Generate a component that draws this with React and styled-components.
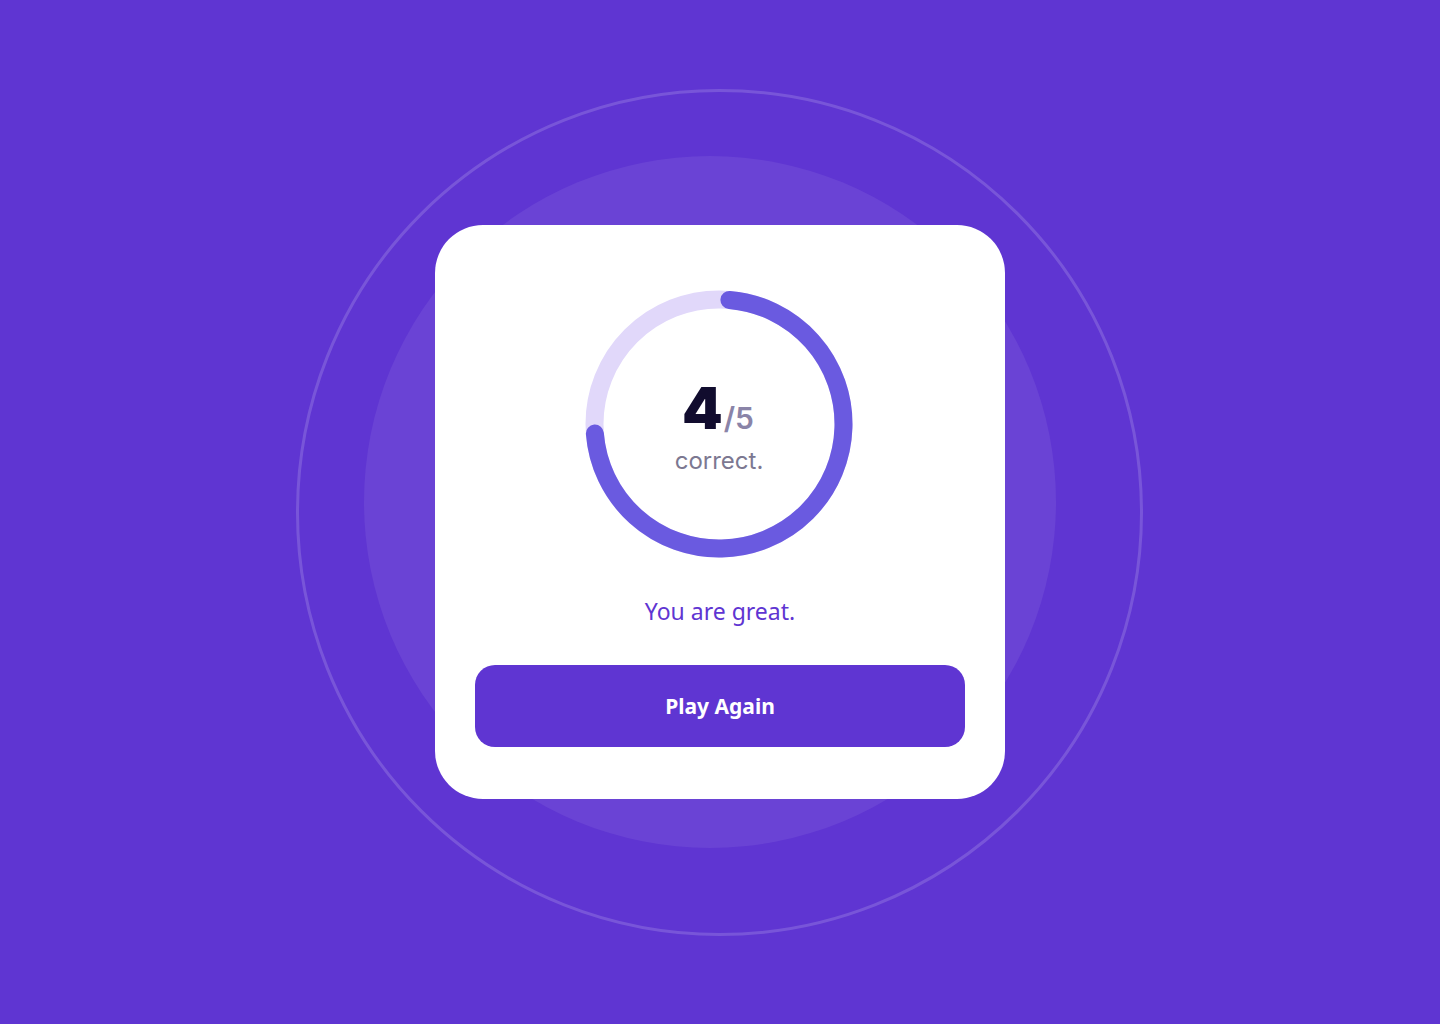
import React from "react";
import styled, { createGlobalStyle } from "styled-components";

const GlobalStyle = createGlobalStyle`
  html, body { margin: 0; padding: 0; }
  body {
    background: #5f35d2;
    font-family: "Inter", "Noto Sans", sans-serif;
  }
  * { box-sizing: border-box; }
`;

const Page = styled.main`
  position: relative;
  width: 100%;
  height: 1024px;
  overflow: hidden;
  display: flex;
  align-items: center;
  justify-content: center;
  background: #5f35d2;
`;

const Halo = styled.div`
  position: absolute;
  border-radius: 50%;
  pointer-events: none;
  left: ${(p) => p.$cx - p.$size / 2}px;
  top: ${(p) => p.$cy - p.$size / 2}px;
  width: ${(p) => p.$size}px;
  height: ${(p) => p.$size}px;
  background: ${(p) => p.$fill || "transparent"};
  border: ${(p) => (p.$line ? `3px solid ${p.$line}` : "none")};
`;

const Card = styled.section`
  position: relative;
  z-index: 1;
  width: 570px;
  height: 574px;
  background: #ffffff;
  border-radius: 48px;
  padding: 65px 40px 0;
  display: flex;
  flex-direction: column;
  align-items: center;
`;

const RingWrap = styled.div`
  display: grid;
  width: 268px;
  height: 268px;
  margin-left: -2px;
  & > * {
    grid-area: 1 / 1;
  }
`;

const Score = styled.div`
  display: flex;
  flex-direction: column;
  align-items: center;
  justify-content: center;
  padding-top: 4px;
`;

const ScoreLine = styled.div`
  display: flex;
  align-items: baseline;
  line-height: 1;
  margin-left: -2px;
`;

const Big = styled.span`
  font-family: "Inter", sans-serif;
  font-size: 58px;
  font-weight: 900;
  color: #110c2e;
  letter-spacing: -1px;
`;

const Total = styled.span`
  font-family: "Inter", sans-serif;
  font-size: 30px;
  font-weight: 600;
  color: #8a84a8;
  margin-left: 2px;
`;

const Label = styled.span`
  font-family: "Inter", sans-serif;
  font-size: 24px;
  font-weight: 400;
  color: #7c7891;
  margin-top: 12px;
  line-height: 1;
`;

const Message = styled.p`
  margin: 38px 0 0;
  font-family: "Noto Sans", "Open Sans", sans-serif;
  font-size: 23px;
  line-height: 30px;
  color: #5f35d2;
`;

const Button = styled.button`
  margin-top: 39px;
  width: 100%;
  height: 82px;
  border: none;
  border-radius: 20px;
  background: #5f35d2;
  color: #ffffff;
  font-family: "Noto Sans", "Open Sans", sans-serif;
  font-size: 21px;
  font-weight: 700;
  cursor: pointer;
`;

function Ring() {
  const cx = 134;
  const r = 124.5;
  const a1 = (4.8 * Math.PI) / 180;
  const a2 = (265.6 * Math.PI) / 180;
  const x1 = cx + r * Math.sin(a1);
  const y1 = cx - r * Math.cos(a1);
  const x2 = cx + r * Math.sin(a2);
  const y2 = cx - r * Math.cos(a2);
  return (
    <svg width="268" height="268" viewBox="0 0 268 268">
      <circle cx={cx} cy={cx} r={r} fill="none" stroke="#e1d8fa" strokeWidth="18" />
      <path
        d={`M ${x1} ${y1} A ${r} ${r} 0 1 1 ${x2} ${y2}`}
        fill="none"
        stroke="#6a5ae0"
        strokeWidth="18"
        strokeLinecap="round"
      />
    </svg>
  );
}

export default function App() {
  return (
    <>
      <GlobalStyle />
      <Page>
        <Halo $cx={710} $cy={502} $size={692} $fill="rgba(255,255,255,0.07)" />
        <Halo $cx={719.5} $cy={512} $size={847} $line="rgba(255,255,255,0.16)" />
        <Card>
          <RingWrap>
            <Ring />
            <Score>
              <ScoreLine>
                <Big>4</Big>
                <Total>/5</Total>
              </ScoreLine>
              <Label>correct.</Label>
            </Score>
          </RingWrap>
          <Message>You are great.</Message>
          <Button>Play Again</Button>
        </Card>
      </Page>
    </>
  );
}
